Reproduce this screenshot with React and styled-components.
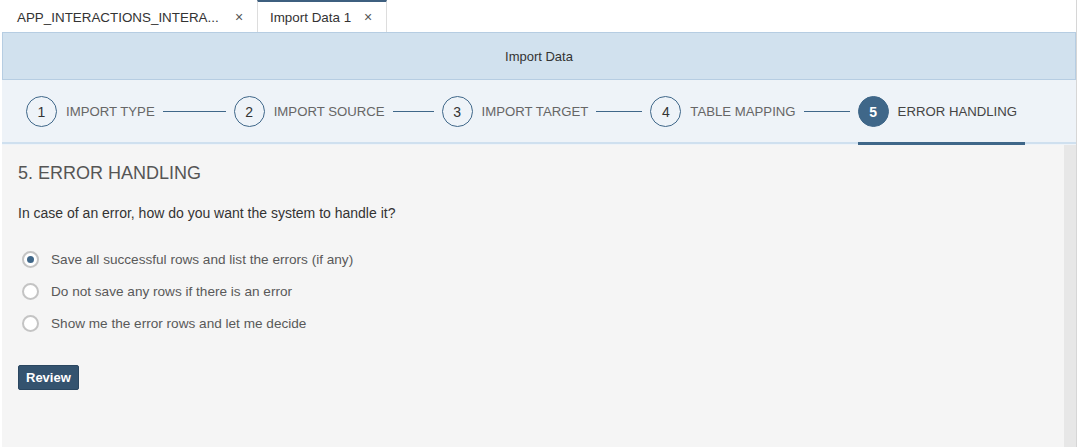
import styled, { createGlobalStyle } from 'styled-components'

const GlobalStyle = createGlobalStyle`
  html, body {
    margin: 0;
    padding: 0;
    background: #ffffff;
  }
  body {
    font-family: "Liberation Sans", Arial, sans-serif;
  }
  #root {
    min-height: 100vh;
    display: flex;
  }
`

const colors = {
  primary: '#3f6789',
  button: '#34536f',
  text: '#333333',
  muted: '#666666',
}

const Page = styled.div`
  width: 1076px;
  display: flex;
  flex-direction: column;
  border-right: 1px solid #d6d6d6;
`

const TabBar = styled.div`
  height: 32px;
  display: flex;
  background: #ffffff;
`

const Tab = styled.div`
  box-sizing: border-box;
  width: ${(p) => p.width}px;
  height: 32px;
  display: flex;
  align-items: center;
  justify-content: space-between;
  padding: 0 ${(p) => (p.active ? 11 : 10)}px 0 ${(p) => (p.active ? 12 : 16)}px;
  font-size: 13.4px;
  color: ${colors.text};
  border-top: 2px solid ${(p) => (p.active ? '#3e5f7f' : 'transparent')};
  border-left: 1px solid ${(p) => (p.active ? '#dddddd' : 'transparent')};
  border-right: 1px solid ${(p) => (p.active ? '#dddddd' : 'transparent')};
  & span:last-child {
    color: #555;
    font-size: 14px;
    width: 14px;
    text-align: center;
  }
`

const Header = styled.div`
  height: 46px;
  margin-left: 2px;
  display: flex;
  align-items: center;
  justify-content: center;
  background: #d1e1ee;
  border: 1px solid #b6cde2;
  font-size: 13px;
  color: ${colors.text};
`

const Stepper = styled.div`
  height: 64px;
  margin-left: 2px;
  display: flex;
  align-items: center;
  padding-left: 24px;
  padding-top: 1px;
  box-sizing: border-box;
  background: #eef3f8;
  border-bottom: 2px solid #cfe0ef;
`

const Step = styled.div`
  display: flex;
  align-items: center;
  height: 100%;
  padding-right: ${(p) => (p.active ? 8 : 0)}px;
  position: relative;
  &::after {
    content: '';
    display: ${(p) => (p.active ? 'block' : 'none')};
    position: absolute;
    left: 0;
    right: 0;
    bottom: -3px;
    height: 3px;
    background: ${colors.primary};
  }
`

const Circle = styled.div`
  box-sizing: border-box;
  width: 31px;
  height: 31px;
  border-radius: 50%;
  border: 1px solid ${colors.primary};
  background: ${(p) => (p.active ? colors.primary : 'transparent')};
  color: ${(p) => (p.active ? '#ffffff' : colors.text)};
  font-weight: ${(p) => (p.active ? 'bold' : 'normal')};
  font-size: 14px;
  display: flex;
  align-items: center;
  justify-content: center;
`

const StepLabel = styled.span`
  margin-left: 9px;
  font-size: 13.2px;
  color: ${(p) => (p.active ? '#444444' : colors.muted)};
`

const Connector = styled.div`
  width: ${(p) => p.width}px;
  height: 1px;
  margin: 0 8px;
  background: ${colors.primary};
`

const Body = styled.div`
  flex: 1;
  display: flex;
  margin-left: 2px;
  background: #f5f5f5;
  border-top: 1px solid #eef3f8;
`

const Content = styled.div`
  flex: 1;
  padding: 16px 16px;
`

const Scrollbar = styled.div`
  width: 12px;
  background: #e7e7e7;
`

const Title = styled.h2`
  margin: 0;
  font-size: 18px;
  font-weight: normal;
  color: #555555;
  line-height: 24px;
`

const Question = styled.p`
  margin: 18px 0 0;
  font-size: 14px;
  color: ${colors.text};
  line-height: 20px;
`

const RadioList = styled.div`
  margin-top: 20px;
  display: flex;
  flex-direction: column;
`

const RadioRow = styled.label`
  height: 32px;
  display: flex;
  align-items: center;
  font-size: 13.6px;
  color: #595959;
`

const RadioDot = styled.span`
  box-sizing: border-box;
  width: 17px;
  height: 17px;
  margin: 0 12px 0 4px;
  border-radius: 50%;
  border: 2px solid #c4c4c4;
  background: #ffffff;
  display: flex;
  align-items: center;
  justify-content: center;
  &::after {
    content: '';
    display: ${(p) => (p.checked ? 'block' : 'none')};
    width: 7px;
    height: 7px;
    border-radius: 50%;
    background: ${colors.primary};
  }
`

const ReviewButton = styled.button`
  margin-top: 26px;
  height: 25px;
  padding: 0 7px;
  border: 1px solid #2a4660;
  border-radius: 2px;
  background: ${colors.button};
  color: #ffffff;
  font-family: inherit;
  font-size: 13px;
  font-weight: bold;
`

const steps = [
  { n: 1, label: 'IMPORT TYPE', line: 63 },
  { n: 2, label: 'IMPORT SOURCE', line: 41 },
  { n: 3, label: 'IMPORT TARGET', line: 46 },
  { n: 4, label: 'TABLE MAPPING', line: 46 },
  { n: 5, label: 'ERROR HANDLING', active: true },
]

const options = [
  { label: 'Save all successful rows and list the errors (if any)', checked: true },
  { label: 'Do not save any rows if there is an error' },
  { label: 'Show me the error rows and let me decide' },
]

function App() {
  return (
    <>
      <GlobalStyle />
      <Page>
        <TabBar>
          <Tab width={257}>
            <span>APP_INTERACTIONS_INTERA...</span>
            <span>×</span>
          </Tab>
          <Tab width={130} active>
            <span>Import Data 1</span>
            <span>×</span>
          </Tab>
        </TabBar>
        <Header>Import Data</Header>
        <Stepper>
          {steps.map((s) => (
            <Step key={s.n} active={s.active}>
              <Circle active={s.active}>{s.n}</Circle>
              <StepLabel active={s.active}>{s.label}</StepLabel>
              {s.line && <Connector width={s.line} />}
            </Step>
          ))}
        </Stepper>
        <Body>
          <Content>
            <Title>5. ERROR HANDLING</Title>
            <Question>In case of an error, how do you want the system to handle it?</Question>
            <RadioList>
              {options.map((o) => (
                <RadioRow key={o.label}>
                  <RadioDot checked={o.checked} />
                  {o.label}
                </RadioRow>
              ))}
            </RadioList>
            <ReviewButton>Review</ReviewButton>
          </Content>
          <Scrollbar />
        </Body>
      </Page>
    </>
  )
}

export default App
